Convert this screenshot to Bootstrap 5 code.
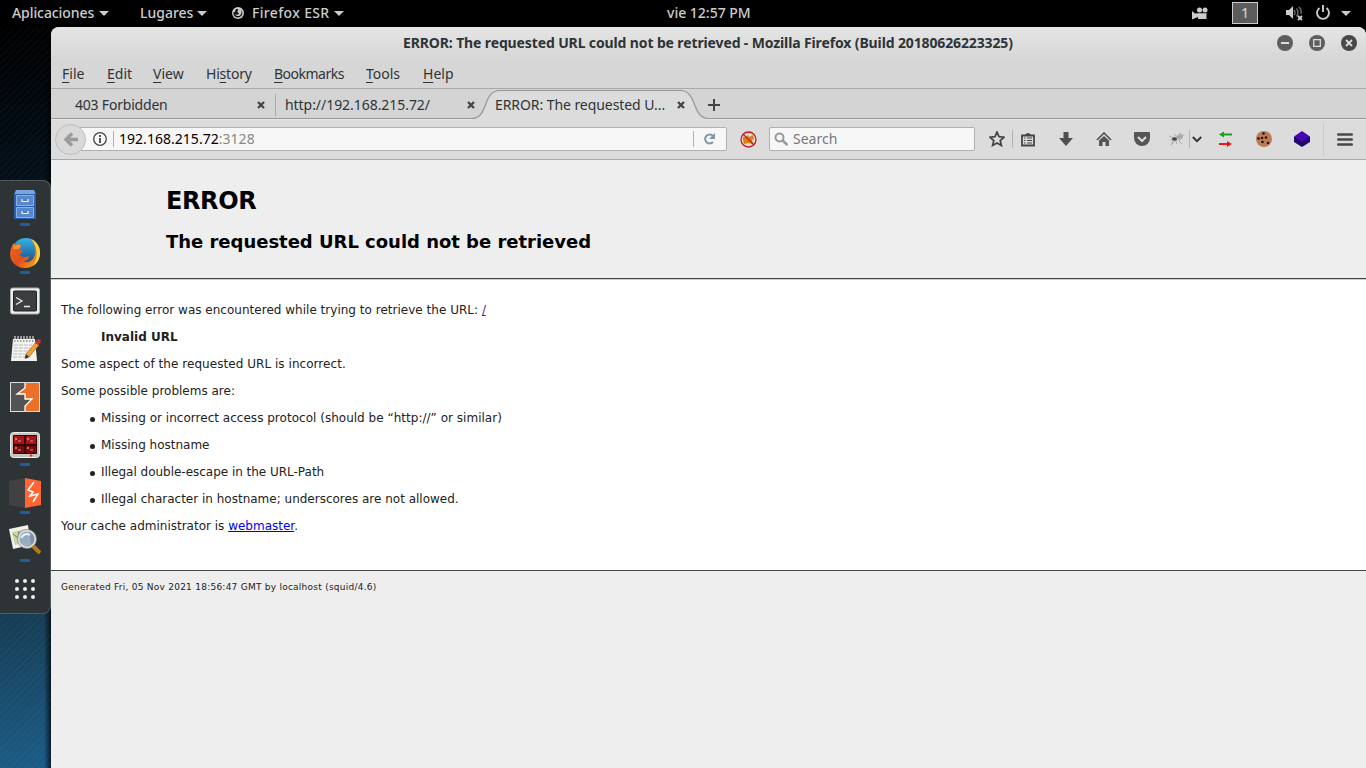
<!DOCTYPE html>
<html lang="es">
<head>
<meta charset="utf-8">
<title>ERROR: The requested URL could not be retrieved</title>
<meta name="viewport" content="width=device-width, initial-scale=1">
<link href="https://cdn.jsdelivr.net/npm/bootstrap@5.3.0/dist/css/bootstrap.min.css" rel="stylesheet">
<script src="https://cdn.jsdelivr.net/npm/bootstrap@5.3.0/dist/js/bootstrap.bundle.min.js"></script>
<style>
  body { width: 1366px; height: 768px; font-family: "Noto Sans", "Open Sans", sans-serif; font-size: 14px; line-height: 20px; color: #2e3436; background: #000; }
  svg { display: block; flex: none; }
  .topbar { height: 27px; color: #ccc; background: #000; font-weight: 500; font-size: 14px; line-height: 26px; }
  .topbar .menu-entry { height: 26px; white-space: nowrap; }
  .caret { width: 0; height: 0; border: 5px solid transparent; border-top-color: #ccc; border-bottom: 0; }
  .clock { width: 84px; margin-left: 323px; white-space: nowrap; }
  .workspace { width: 26px; height: 22px; border: 1px solid #ccc; background: #5c5c5c; line-height: 20px; }
  .desktop { width: 51px; padding-top: 153px; background: repeating-linear-gradient(135deg, rgba(255,255,255,.02) 0 2px, transparent 2px 5px), linear-gradient(90deg, transparent 44px, rgba(0,0,0,.7) 51px), linear-gradient(170deg, #000 0, #010a11 100px, #0b2536 350px, #163e56 590px, #1c5d88 741px); }
  .dock { width: 51px; height: 434px; background: #2e3436; border: 1px solid #54595b; border-left: 0; border-radius: 0 8px 8px 0; }
  .launcher { width: 49px; height: 48px; padding: 8px 0 0 9px; }
  .launcher.running::after { content: ""; display: block; width: 10px; height: 3px; margin: 2px 0 0 11px; background: #215d9c; }
  .browser { width: 1315px; height: 741px; overflow: hidden; border-radius: 8px 8px 0 0; background: #d6d6d6; }
  .titlebar { height: 33px; background: linear-gradient(#e5e5e5, #d6d6d6); font-weight: 700; letter-spacing: -.127px; padding: 0 9px 1px 352px; }
  .menubar { height: 29px; border-bottom: 1px solid #a9a9a9; padding-left: 11px; padding-bottom: 1px; }
  .menubar u { text-underline-offset: 3px; text-decoration-thickness: 1px; }
  .tabstrip { height: 30px; background: #d4d4d4; box-shadow: inset 0 -1px #999; padding-top: 5px; }
  .tab-item { height: 22px; line-height: 22px; }
  .tab-active { width: 237px; height: 31px; margin: -5px 0 0 -13px; }
  .tab-shape { left: 0; top: 0; }
  .tab-active-label { height: 32px; padding: 0 24px 0 32px; top: 0; left: 0; width: 237px; }
  .toolbar-row { height: 41px; background: #dcdcdc; border-bottom: 1px solid #aaa; padding-left: 4px; box-shadow: inset 0 1px #e5e5e5; }
  .back { width: 31px; height: 31px; border: 1px solid #bdbdbd; border-radius: 50%; background: #d9d9d9; margin-right: -7px; z-index: 1; }
  .field { height: 24px; border: 1px solid #b0b0b0; border-radius: 2px; background: #f7f7f7; }
  .addr { width: 648px; padding-left: 13px; }
  .rule-v { width: 1px; background: #b3b3b3; }
  .err { font-family: "DejaVu Sans", Verdana, sans-serif; font-size: 12px; line-height: 15px; color: #222; background: #eee; height: 608px; }
  .err-head { height: 119px; padding: 27px 0 0 115px; border-bottom: 1px solid #444; color: #000; }
  .err h1 { font-size: 24px; line-height: 28px; font-weight: 700; letter-spacing: -.4px; margin: 0 0 16px; }
  .err h2 { font-size: 18px; line-height: 22px; font-weight: 700; letter-spacing: -.02px; margin: 0; }
  .err-body { height: 292px; background: #fff; border-bottom: 1px solid #444; border-top: 1px solid #ccc; padding: 23px 10px 0; }
  .err p, .err li { margin: 0 0 12px; }
  .err ul { padding-left: 40px; margin: 0; list-style: none; }
  .err li::before { content: ""; float: left; width: 5px; height: 5px; margin: 6px 0 0 -11px; border-radius: 50%; background: #222; }
  .err .foot-note { font-size: 9px; line-height: 12px; padding: 10px; letter-spacing: .246px; }
</style>
</head>
<body class="m-0 overflow-hidden">
<header class="topbar d-flex align-items-start">
  <div class="menu-entry d-flex align-items-center" style="width:128px;padding-left:12px"><span style="letter-spacing:-.08px">Aplicaciones</span><i class="caret ms-auto" style="margin-right:19px"></i></div>
  <div class="menu-entry d-flex align-items-center" style="width:104px;padding-left:12px"><span>Lugares</span><i class="caret ms-auto" style="margin-right:25px"></i></div>
  <div class="menu-entry d-flex align-items-center" style="width:112px">
    <svg width="12" height="12" viewBox="0 0 12 12"><circle cx="6" cy="6" r="6" fill="#ccc"/><path d="M4 2c2 0 3 .5 2 1.500S5 5 6.500 6 5 8.500 3 7c1 3 6 3 6.500-1.500C10 4 9 2.500 8 2c3 1 4 8-2 8.500C2 10.500 1 7 1.500 5l1 .5Z" fill="#111"/></svg>
    <span style="margin-left:8px;letter-spacing:.35px">Firefox ESR</span><i class="caret ms-auto"></i></div>
  <div class="clock">vie 12:57 PM</div>
  <svg class="ms-auto" style="margin-top:7px" width="17" height="13" viewBox="0 0 17 13" fill="#ccc"><circle cx="7.500" cy="3" r="2.500"/><circle cx="13" cy="3" r="2.500"/><path d="M6 6.300h8.500V12H6v-2l-6 2.500V4l3 2.500Z"/></svg>
  <div class="workspace text-center" style="margin:2px 28px 0 23px">1</div>
  <svg style="margin-top:6px" width="18" height="15" viewBox="0 0 18 15"><path d="M0 4h3l4-4v13L3 9H0Z" fill="#ccc"/><path d="M8 4q2 2.500 0 5M10.500 2.500q3 4 0 8M13 1q3 3 2 7" fill="none" stroke="#666" stroke-width="1.500"/><path d="m12 10 4 4m0-4-4 4" stroke="#ccc" stroke-width="1.800"/></svg>
  <svg style="margin:5px 0 0 11px" width="16" height="16" viewBox="0 0 16 16" fill="none" stroke="#ccc" stroke-width="1.900"><path d="M4.500 3a6 6 0 1 0 7 0M8 0v7"/></svg>
  <i class="caret" style="margin:11px 15px 0 10px"></i>
</header>
<main class="d-flex" style="height:741px">
<aside class="desktop flex-shrink-0">
  <nav class="dock">
    <div class="launcher running"><svg width="32" height="32" viewBox="0 0 32 32"><path d="M7 1h18l2 4v25H5V5Z" fill="#2e5fa8"/><path d="M7 1h18l1.500 4h-21Z" fill="#7ba4df"/><path d="M7.500 6.500h17v10h-17zM7.500 18.500h17v10h-17z" fill="#5488d0" stroke="#8bb0e5"/><path d="M13 10v2.500h6V10M13 22v2.500h6V22" fill="#777" stroke="#eee" stroke-width="1.200"/></svg></div>
    <div class="launcher running"><svg width="32" height="32" viewBox="0 0 32 32"><defs><linearGradient id="fx" x1="0" y1="0" x2="1" y2="1"><stop stop-color="#e86a20"/><stop offset=".55" stop-color="#e2501c"/><stop offset="1" stop-color="#f9b825"/></linearGradient><linearGradient id="gl" x1="0" y1="0" x2="0" y2="1"><stop stop-color="#35b3e8"/><stop offset="1" stop-color="#15437e"/></linearGradient></defs><circle cx="17" cy="15" r="14" fill="url(#gl)"/><path d="M22 2c6 3 9 8 9 14 0 9-7 15-15 15S1 25 1 17C1 12 3 8 5 6l1 3c2-2 4-2 6-1 0 2-1 3-2 4l4 2c-1 2-3 2-3 4 3 3 6 2 9 1 0 4-3 5-6 5 7 3 12-2 12-9 0-5-1-9-4-13Z" fill="url(#fx)"/><path d="M22 2c6 3 9 8 9 14s-3 10-7 13c5-7 5-19-2-27Z" fill="#fbd13c"/><path d="M5 6 4 12l6 0q2-2 2-4-3-2-6 1Z" fill="#f3922c"/></svg></div>
    <div class="launcher"><svg width="32" height="32" viewBox="0 0 32 32"><rect x="1.500" y="3" width="29" height="26" rx="2" fill="#eee" stroke="#aaa"/><rect x="4.500" y="6" width="23" height="20" rx="1" fill="#3c3f40" stroke="#222"/><path d="m7 12.500 6 3.500-6 3.500M15 21.500h6" fill="none" stroke="#eee" stroke-width="1.300"/></svg></div>
    <div class="launcher"><svg width="32" height="32" viewBox="0 0 32 32"><path d="M4 6h22l2 22H2Z" fill="#f3f3f0"/><path d="M6 6v-3m3 3V3m3 3V3m3 3V3m3 3V3m3 3V3m3 3V3" stroke="#bbb" stroke-width="1.500"/><path d="M5 8h20" stroke="#555" stroke-dasharray="1.500"/><path d="M5 12h18M5 15h16M4.500 18h14M4.500 21h11M4 24h12" stroke="#bbb" stroke-dasharray="4 1"/><path d="m17 21 10-12 3 3-10 12-4 1Z" fill="#f1a034" stroke="#ad661d" stroke-width=".7"/><path d="m26 10 3-4q3 0 3 3l-3 3Z" fill="#c9332e"/><path d="m17 21 3 3-4 2Z" fill="#333"/></svg></div>
    <div class="launcher"><svg width="32" height="32" viewBox="0 0 32 32"><path d="M1.500 1.500h29v29h-29Z" fill="#535353"/><path d="M16 2h14v28H16v-5l7-7h-7v-5H9l7-6Z" fill="#ea7127"/><path d="M16 1v6l-8 6h8v5h7l-7 7v6" fill="none" stroke="#fff" stroke-width="1.300"/><rect x="1.500" y="1.500" width="29" height="29" fill="none" stroke="#ddd"/></svg></div>
    <div class="launcher running"><svg width="32" height="32" viewBox="0 0 32 32"><rect x="1.500" y="3.500" width="29" height="25" rx="3" fill="#c5c4bf" stroke="#eee"/><rect x="4" y="6" width="24" height="19" rx="1" fill="#350607"/><path d="M5 7h10v8H5zM17 7h10v8H17z" fill="#a81418"/><path d="M5 17h10v7H5zM17 17h10v7H17z" fill="#780b10"/><path d="m6 9 2 1-2 1m3 1h3M18 9l2 1-2 1m3 1h3M6 18l2 1-2 1m3 1h3m6-3 2 1-2 1m3 1h3" fill="none" stroke="#efa6a6" stroke-width=".8"/><circle cx="22" cy="26.500" r="1.200" fill="#e33"/></svg></div>
    <div class="launcher running"><svg width="32" height="32" viewBox="0 0 32 32"><path d="M0 4 16 1v30L0 28Z" fill="#414141"/><path d="m16 1 16 3v24l-16 3Z" fill="#ff6633"/><path d="m25 5-6 8 5 2-3 4 8-2-5 8" fill="none" stroke="#fff" stroke-width="1.500"/></svg></div>
    <div class="launcher running"><svg width="32" height="32" viewBox="0 0 32 32"><path d="m0 4 19-4 3 20-18 4Z" fill="#eef0e9"/><path d="m3 7 14-3 2 13-13 3Z" fill="#c8d6a6"/><path d="m4 9 5 4 1-7m1 7 6-3" stroke="#6a8151" fill="none"/><circle cx="18" cy="14" r="8.500" fill="#8ba3bc" fill-opacity=".85" stroke="#ddd" stroke-width="2"/><circle cx="18" cy="14" r="9.600" fill="none" stroke="#777" stroke-width=".6"/><path d="M12 13q4-6 9-3" stroke="#e8f0fa" stroke-width="2" fill="none"/><path d="m24 21 7 7" stroke="#b97917" stroke-width="4"/></svg></div>
    <div class="launcher"><svg width="32" height="32" viewBox="0 0 32 32" fill="#eee"><circle cx="8" cy="8" r="2"/><circle cx="16" cy="8" r="2"/><circle cx="24" cy="8" r="2"/><circle cx="8" cy="16" r="2"/><circle cx="16" cy="16" r="2"/><circle cx="24" cy="16" r="2"/><circle cx="8" cy="24" r="2"/><circle cx="16" cy="24" r="2"/><circle cx="24" cy="24" r="2"/></svg></div>
  </nav>
</aside>
<section class="browser">
  <div class="titlebar d-flex align-items-center text-nowrap"><span>ERROR: The requested URL could not be retrieved - Mozilla Firefox (Build 20180626223325)</span>
    <div class="d-flex ms-auto" style="gap:16px">
      <svg width="16" height="16" viewBox="0 0 16 16"><circle cx="8" cy="8" r="8" fill="#5e5e5e"/><path d="M4 8h8" stroke="#ddd" stroke-width="2"/></svg>
      <svg width="16" height="16" viewBox="0 0 16 16"><circle cx="8" cy="8" r="8" fill="#5e5e5e"/><path d="M4.700 4.700h6.600v6.600H4.700Z" fill="none" stroke="#ddd" stroke-width="1.300"/></svg>
      <svg width="16" height="16" viewBox="0 0 16 16"><circle cx="8" cy="8" r="8" fill="#484848"/><path d="m5 5 6 6m0-6-6 6" stroke="#ddd" stroke-width="1.800"/></svg>
    </div></div>
  <nav class="menubar d-flex align-items-center text-nowrap">
    <span style="width:45px"><u>F</u>ile</span><span style="width:46px"><u>E</u>dit</span><span style="width:53px"><u>V</u>iew</span><span style="width:68px;letter-spacing:-.2px">Hi<u>s</u>tory</span><span style="width:92px;letter-spacing:-.5px"><u>B</u>ookmarks</span><span style="width:57px"><u>T</u>ools</span><span><u>H</u>elp</span>
  </nav>
  <div class="tabstrip d-flex text-nowrap">
    <div class="tab-item d-flex align-items-center" style="width:225px;padding:0 10px 0 24px;border-right:1px solid #aaa"><span style="letter-spacing:-.2px">403 Forbidden</span><svg class="ms-auto" width="8" height="8" viewBox="0 0 8 8"><path d="m1 1 6 6m0-6-6 6" stroke="#444" stroke-width="2.300"/></svg></div>
    <div class="tab-item d-flex align-items-center" style="width:209px;padding:0 10px 0 9px"><span style="letter-spacing:-.05px">http://192.168.215.72/</span><svg class="ms-auto" width="8" height="8" viewBox="0 0 8 8"><path d="m1 1 6 6m0-6-6 6" stroke="#444" stroke-width="2.300"/></svg></div>
    <div class="tab-active position-relative">
      <svg class="tab-shape position-absolute" width="237" height="31" viewBox="0 0 237 31"><path d="M0 29.500C17 29.500 10 1.500 28 1.500H208C226 1.500 219 29.500 237 29.500V31H0Z" fill="#dcdcdc"/><path d="M0 29.500C17 29.500 10 1.500 28 1.500H208C226 1.500 219 29.500 237 29.500" fill="none" stroke="#8f979d" stroke-width="1.200"/></svg>
      <div class="tab-active-label position-absolute d-flex align-items-center"><span style="margin-left:-9px;letter-spacing:-.07px">ERROR: The requested U...</span><svg class="ms-auto" width="8" height="8" viewBox="0 0 8 8"><path d="m1 1 6 6m0-6-6 6" stroke="#444" stroke-width="2.300"/></svg></div>
    </div>
    <svg style="margin:5px 0 0 -1px" width="12" height="12" viewBox="0 0 12 12"><path d="M6 0v12M0 6h12" stroke="#444" stroke-width="2"/></svg>
  </div>
  <div class="toolbar-row d-flex align-items-center text-nowrap">
    <div class="back d-flex align-items-center justify-content-center position-relative"><svg width="14" height="15" viewBox="0 0 14 15"><path d="M14 7.500H3M8 1.500l-6 6 6 6" fill="none" stroke="#9b9b9b" stroke-width="3.400"/></svg></div>
    <div class="field addr d-flex align-items-center">
      <svg width="14" height="14" viewBox="0 0 14 14"><circle cx="7" cy="7" r="6.300" fill="none" stroke="#444" stroke-width="1.300"/><path d="M7 6v5M7 3v2" stroke="#444" stroke-width="1.800"/></svg>
      <i class="rule-v" style="height:16px;margin:0 5px 0 6px"></i><span class="text-black" style="letter-spacing:.03px">192.168.215.72<span style="color:#888">:3128</span></span>
      <i class="rule-v ms-auto" style="height:16px"></i>
      <svg style="margin:0 10px 0 9px" width="13" height="12" viewBox="0 0 13 12"><path d="M10 9a4.500 4.500 0 1 1 0-6" fill="none" stroke="#8196a6" stroke-width="2"/><path d="M12 0v6H6Z" fill="#8196a6"/></svg>
    </div>
    <svg style="margin:0 12px 0 13px" width="17" height="17" viewBox="0 0 17 17"><path d="M3 6h3l2-2 1 2 4-2 1 4-2 1 1 4-5-1-4 1-1-4Z" fill="#d98308"/><circle cx="8.500" cy="8.500" r="7.500" fill="none" stroke="#ce1620" stroke-width="1.300"/><path d="m3 3 11 11" stroke="#ce1620" stroke-width="1.300"/></svg>
    <div class="field d-flex align-items-center" style="width:206px;padding-left:4px;color:#777"><svg style="margin-right:5px" width="14" height="14" viewBox="0 0 14 14" fill="none" stroke="#999" stroke-width="2"><circle cx="5.500" cy="5.500" r="4"/><path d="m8.500 8.500 5 4.500" stroke-width="2.600"/></svg><span>Search</span></div>
    <svg style="margin-left:14px" width="16" height="16" viewBox="0 0 16 16"><path d="m8 1 2 4.700 5 .5-3.800 3.300 1.200 5L8 12l-4.400 2.500 1.200-5L1 6.200l5-.5Z" fill="none" stroke="#444" stroke-width="1.700"/></svg>
    <i class="rule-v" style="height:18px;margin:0 8px 0 7px"></i>
    <svg width="14" height="15" viewBox="0 0 14 15"><path d="M1 3.500h12v10H1Z" fill="none" stroke="#444" stroke-width="1.800"/><path d="M4 3q3-4 6 0Z" fill="#444"/><path d="M3 6h1.500M6 6h5M3 8.500h1.500M6 8.500h5M3 11h1.500M6 11h5" stroke="#444" stroke-width="1.100"/></svg>
    <svg style="margin-left:24px" width="14" height="14" viewBox="0 0 14 14"><path d="M4.500 0h5v6H14l-7 8-7-8h4.500Z" fill="#505050"/></svg>
    <svg style="margin-left:23px" width="16" height="14" viewBox="0 0 16 14"><path d="m1 8 7-7 7 7" fill="none" stroke="#555" stroke-width="1.700"/><path d="M3 8.500 8 4l5 4.500V14H9.500v-4h-3v4H3Z" fill="#555"/></svg>
    <svg style="margin-left:22px" width="16" height="14" viewBox="0 0 16 14"><path d="M1 0h14q1 0 1 1v5a8 8 0 0 1-16 0V1q0-1 1-1Z" fill="#555"/><path d="m4 5 4 4 4-4" fill="none" stroke="#ddd" stroke-width="2"/></svg>
    <svg style="margin-left:19px" width="16" height="14" viewBox="0 0 16 14"><path d="m0 4 5 2 7-5-4 6 6-2-4 4 3 3M1 8l4-1-3 6 5-5 1 4M5 2l4 4 6-3" fill="none" stroke="#999" stroke-width=".7"/><ellipse cx="5.500" cy="7" rx="2.500" ry="1.800" fill="#444"/><path d="m7 5 6-3 1 3-5 3Z" fill="#aaa"/></svg>
    <i class="rule-v" style="height:18px;margin:0 2px 0 4px"></i>
    <svg width="10" height="7" viewBox="0 0 10 7"><path d="m.8 1 4.200 4.200L9.200 1" fill="none" stroke="#333" stroke-width="2"/></svg>
    <svg style="margin-left:17px" width="13" height="16" viewBox="0 0 13 16"><path d="M4 3.500h9" stroke="#13a513" stroke-width="2"/><path d="M5 .5v6l-5-3Z" fill="#13a513"/><path d="M0 13h9" stroke="#f01515" stroke-width="2"/><path d="M8 10v6l5-3Z" fill="#f01515"/></svg>
    <svg style="margin-left:24px" width="16" height="16" viewBox="0 0 16 16"><circle cx="8" cy="8" r="8" fill="#bd7b55"/><g fill="#24140c"><circle cx="7.500" cy="2.500" r="1.300"/><circle cx="2.500" cy="7.500" r="1.300"/><circle cx="6" cy="7" r="1.300"/><circle cx="10" cy="6.500" r="1.300"/><circle cx="6.500" cy="11" r="1.300"/><circle cx="12" cy="12" r="1.300"/></g></svg>
    <svg style="margin-left:22px" width="16" height="16" viewBox="0 0 16 16"><path d="m0 6 8-3 8 3v5l-8 5-8-5Z" fill="#22066e"/><path d="m8 0 8 5.500-8 5.500-8-5.500Z" fill="#4808b0"/></svg>
    <i class="rule-v" style="height:33px;margin:0 13px;background:#c9c9c9"></i>
    <svg width="16" height="13" viewBox="0 0 16 13"><path d="M1.300 1.500h13.400M1.300 6.500h13.400M1.300 11.500h13.400" stroke="#484848" stroke-width="2.600" stroke-linecap="round"/></svg>
  </div>
  <article class="err">
    <div class="err-head"><h1>ERROR</h1><h2>The requested URL could not be retrieved</h2></div>
    <div class="err-body">
      <p style="letter-spacing:.015px">The following error was encountered while trying to retrieve the URL: <a href="#" style="color:#551a8b">/</a></p>
      <p class="fw-bold" style="padding-left:40px">Invalid URL</p>
      <p style="letter-spacing:.045px">Some aspect of the requested URL is incorrect.</p>
      <p>Some possible problems are:</p>
      <ul><li style="letter-spacing:.02px">Missing or incorrect access protocol (should be “http://” or similar)</li><li>Missing hostname</li><li style="letter-spacing:-.02px">Illegal double-escape in the URL-Path</li><li>Illegal character in hostname; underscores are not allowed.</li></ul>
      <p>Your cache administrator is <a href="#" style="color:#0000ee">webmaster</a>.</p>
    </div>
    <div class="foot-note">Generated Fri, 05 Nov 2021 18:56:47 GMT by localhost (squid/4.6)</div>
  </article>
</section>
</main>
</body>
</html>
